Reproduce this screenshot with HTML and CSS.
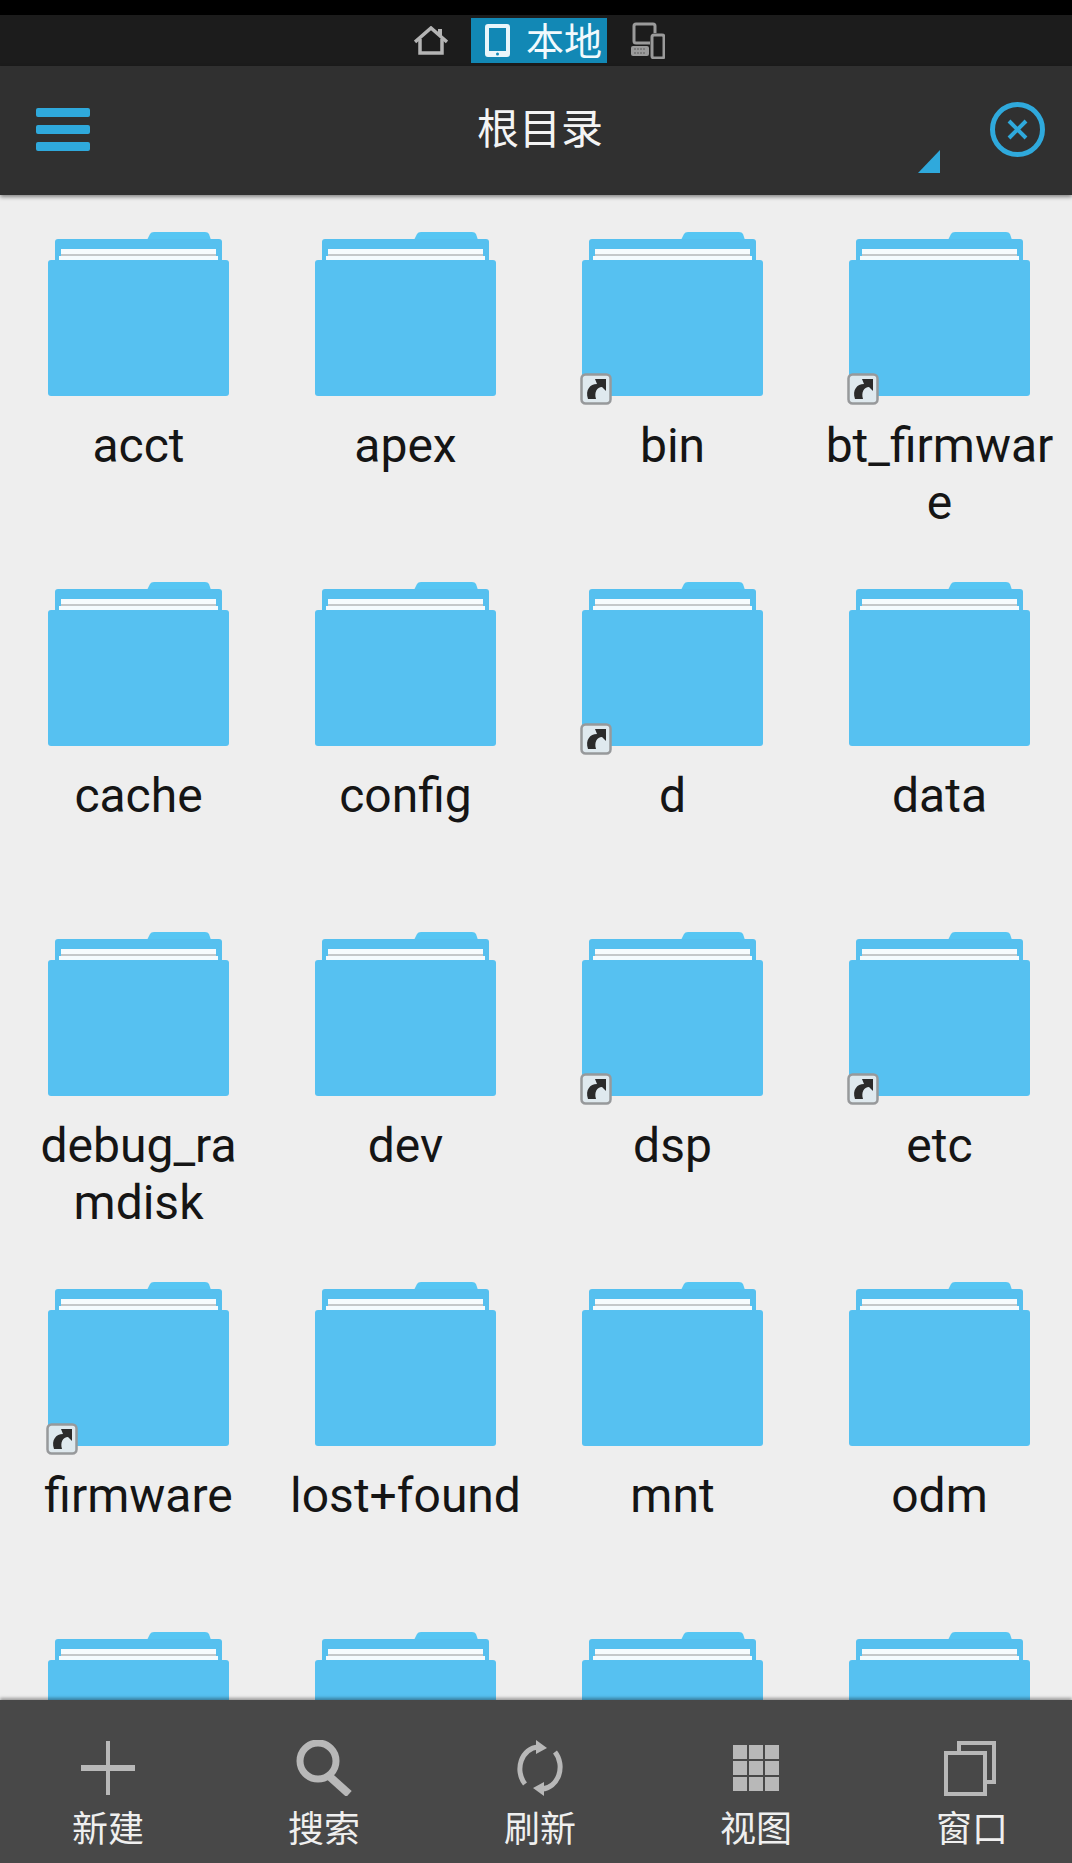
FILE: index.html
```html
<!DOCTYPE html>
<html lang="zh-CN">
<head>
    <meta charset="UTF-8">
    <meta name="viewport" content="width=device-width, initial-scale=1.0">
    <title>根目录</title>
    <link rel="stylesheet" href="styles.css">
</head>
<body>

<!-- Shared folder and shortcut drawings -->
<svg class="sprites" width="0" height="0">
    <symbol id="folder" viewBox="0 0 181 165">
        <path d="M99 8 L102 2 Q103 0 106 0 H157 Q160 0 161 2 L163 8 Z" fill="#56c6f3"/>
        <path d="M7 30 V10 Q7 7 10 7 H171 Q174 7 174 10 V30 Z" fill="#56c0ef"/>
        <rect x="13" y="17" width="155" height="5" fill="#f6fbfd"/>
        <rect x="13" y="22" width="155" height="2" fill="#c4c8ca"/>
        <rect x="11" y="24" width="159" height="4" fill="#f4fbfe"/>
        <path d="M0 161 V31 Q0 28 3 28 H178 Q181 28 181 31 V161 Q181 164 178 164 H3 Q0 164 0 161 Z" fill="#56c1f1"/>
    </symbol>
    <symbol id="shortcut" viewBox="0 0 32 32">
        <rect x="1.5" y="1.5" width="29" height="29" rx="4" fill="#dfe9ee" stroke="#97999b" stroke-width="2.5"/>
        <path d="M8 26 C5 17 10 11 17 11 L15 6 H26 V18 L22 14 C17 14 14 19 16 26 Z" fill="#2b2b2b"/>
    </symbol>
</svg>

<div class="status-bar"></div>

<div class="tab-bar">
    <svg class="tab-icon home-icon" viewBox="0 0 34 29" fill="none" stroke="#b4b4b4" stroke-width="3.5">
        <path d="M1 16 L17 2 L33 16"/>
        <path d="M6 13 V27 H28 V13"/>
        <path d="M26 3 V10" stroke-width="4"/>
    </svg>
    <div class="tab-active">
        <svg class="tablet-icon" viewBox="0 0 25 33">
            <path fill-rule="evenodd" fill="#eaf6fb" d="M3 0 H22 Q25 0 25 3 V30 Q25 33 22 33 H3 Q0 33 0 30 V3 Q0 0 3 0 Z M4 4 V27 H21 V4 Z"/>
            <circle cx="12.5" cy="30" r="1.5" fill="#1288b5"/>
        </svg>
        <span>本地</span>
    </div>
    <svg class="tab-icon devices-icon" viewBox="0 0 34 37" fill="none" stroke="#9a9a9a" stroke-width="3">
        <path d="M19 21 H5 Q3 21 3 19 V4 Q3 2 5 2 H22 Q24 2 24 4 V11"/>
        <rect x="21" y="13" width="12" height="23" rx="2"/>
        <rect x="0" y="24" width="18" height="10" rx="2" fill="#9a9a9a" stroke="none"/>
        <path d="M3 27 H15 M3 31 H15" stroke="#5c5c5c" stroke-width="1" stroke-dasharray="2 1"/>
    </svg>
</div>

<header class="top-bar">
    <div class="menu-icon"><i></i><i></i><i></i></div>
    <h1>根目录</h1>
    <div class="corner-mark"></div>
    <svg class="close-icon" viewBox="0 0 55 55" fill="none" stroke="#2fa9dc">
        <circle cx="27.5" cy="27.5" r="25" stroke-width="5"/>
        <path d="M19 19 L36 36 M36 19 L19 36" stroke-width="4"/>
    </svg>
</header>

<main class="file-grid">
    <div class="file-item"><div class="thumb"><svg class="folder"><use href="#folder"/></svg></div><p>acct</p></div>
    <div class="file-item"><div class="thumb"><svg class="folder"><use href="#folder"/></svg></div><p>apex</p></div>
    <div class="file-item"><div class="thumb"><svg class="folder"><use href="#folder"/></svg><svg class="badge"><use href="#shortcut"/></svg></div><p>bin</p></div>
    <div class="file-item"><div class="thumb"><svg class="folder"><use href="#folder"/></svg><svg class="badge"><use href="#shortcut"/></svg></div><p>bt_firmware</p></div>

    <div class="file-item"><div class="thumb"><svg class="folder"><use href="#folder"/></svg></div><p>cache</p></div>
    <div class="file-item"><div class="thumb"><svg class="folder"><use href="#folder"/></svg></div><p>config</p></div>
    <div class="file-item"><div class="thumb"><svg class="folder"><use href="#folder"/></svg><svg class="badge"><use href="#shortcut"/></svg></div><p>d</p></div>
    <div class="file-item"><div class="thumb"><svg class="folder"><use href="#folder"/></svg></div><p>data</p></div>

    <div class="file-item"><div class="thumb"><svg class="folder"><use href="#folder"/></svg></div><p>debug_ramdisk</p></div>
    <div class="file-item"><div class="thumb"><svg class="folder"><use href="#folder"/></svg></div><p>dev</p></div>
    <div class="file-item"><div class="thumb"><svg class="folder"><use href="#folder"/></svg><svg class="badge"><use href="#shortcut"/></svg></div><p>dsp</p></div>
    <div class="file-item"><div class="thumb"><svg class="folder"><use href="#folder"/></svg><svg class="badge"><use href="#shortcut"/></svg></div><p>etc</p></div>

    <div class="file-item"><div class="thumb"><svg class="folder"><use href="#folder"/></svg><svg class="badge"><use href="#shortcut"/></svg></div><p>firmware</p></div>
    <div class="file-item"><div class="thumb"><svg class="folder"><use href="#folder"/></svg></div><p>lost+found</p></div>
    <div class="file-item"><div class="thumb"><svg class="folder"><use href="#folder"/></svg></div><p>mnt</p></div>
    <div class="file-item"><div class="thumb"><svg class="folder"><use href="#folder"/></svg></div><p>odm</p></div>

    <div class="file-item"><div class="thumb"><svg class="folder"><use href="#folder"/></svg></div></div>
    <div class="file-item"><div class="thumb"><svg class="folder"><use href="#folder"/></svg></div></div>
    <div class="file-item"><div class="thumb"><svg class="folder"><use href="#folder"/></svg></div></div>
    <div class="file-item"><div class="thumb"><svg class="folder"><use href="#folder"/></svg></div></div>
</main>

<footer class="tool-bar">
    <div class="tool">
        <svg viewBox="0 0 56 56" fill="none" stroke="#b8b8b8" stroke-width="5">
            <path d="M28 1 V55" stroke-width="4"/>
            <path d="M1 28 H55" stroke-width="6"/>
        </svg>
        <span>新建</span>
    </div>
    <div class="tool">
        <svg viewBox="0 0 56 56" fill="none" stroke="#b8b8b8" stroke-width="7">
            <circle cx="22" cy="21" r="18"/>
            <path d="M33 36 L53 54" stroke-width="8"/>
        </svg>
        <span>搜索</span>
    </div>
    <div class="tool">
        <svg viewBox="0 0 56 56" fill="none" stroke="#b8b8b8" stroke-width="5">
            <path d="M13 44 A19 22 0 0 1 26 7"/>
            <path d="M43 12 A19 22 0 0 1 30 49"/>
            <path d="M24 0 L35 8 L24 14 Z M32 56 L21 48 L32 42 Z" fill="#b8b8b8" stroke="none"/>
        </svg>
        <span>刷新</span>
    </div>
    <div class="tool">
        <svg viewBox="0 0 56 56" fill="#b8b8b8">
            <rect x="5" y="5" width="14" height="14"/><rect x="21" y="5" width="14" height="14"/><rect x="37" y="5" width="14" height="14"/>
            <rect x="5" y="21" width="14" height="14"/><rect x="21" y="21" width="14" height="14"/><rect x="37" y="21" width="14" height="14"/>
            <rect x="5" y="37" width="14" height="14"/><rect x="21" y="37" width="14" height="14"/><rect x="37" y="37" width="14" height="14"/>
        </svg>
        <span>视图</span>
    </div>
    <div class="tool">
        <svg viewBox="0 0 56 56" fill="none" stroke="#b8b8b8" stroke-width="4">
            <path d="M15 11 V3 H50 V42 H42"/>
            <rect x="2" y="13" width="39" height="41"/>
        </svg>
        <span>窗口</span>
    </div>
</footer>

</body>
</html>
```

FILE: styles.css
```css
body, html {
    margin: 0;
    padding: 0;
    width: 1072px;
    height: 1863px;
    overflow: hidden;
}

body {
    display: flex;
    flex-direction: column;
    background-color: #eeeeee;
    font-family: Roboto, "Noto Sans CJK SC", sans-serif;
}

.sprites {
    position: absolute;
}

.status-bar {
    height: 15px;
    flex-shrink: 0;
    background-color: #000;
}

/* Location tabs */
.tab-bar {
    height: 51px;
    flex-shrink: 0;
    display: flex;
    justify-content: center;
    align-items: center;
    background-color: #1c1c1c;
}

.tab-icon {
    display: block;
}

.home-icon {
    width: 34px;
    height: 29px;
    margin-right: 23px;
    margin-left: 7px;
}

.devices-icon {
    width: 34px;
    height: 37px;
    margin-left: 24px;
}

.tab-active {
    width: 136px;
    height: 45px;
    box-sizing: border-box;
    padding-left: 14px;
    display: flex;
    align-items: center;
    background-color: #1288b5;
    color: #f2fafd;
    font-family: "Noto Sans CJK SC", sans-serif;
    font-size: 38px;
    line-height: 41px;
}

.tab-active span {
    margin-bottom: 4px;
}

.tablet-icon {
    width: 25px;
    height: 33px;
    margin-right: 16px;
}

/* Title bar */
.top-bar {
    position: relative;
    z-index: 1;
    height: 129px;
    flex-shrink: 0;
    box-sizing: border-box;
    padding: 0 0 10px 8px;
    display: flex;
    justify-content: center;
    align-items: center;
    background-color: #303030;
    box-shadow: 0 2px 4px rgba(0, 0, 0, 0.45);
}

.top-bar h1 {
    margin: 0;
    color: #f4f4f4;
    font-family: "Noto Sans CJK SC", sans-serif;
    font-size: 42px;
    font-weight: 400;
}

.menu-icon {
    position: absolute;
    left: 36px;
    top: 42px;
    width: 54px;
    display: flex;
    flex-direction: column;
    gap: 8px;
}

.menu-icon i {
    display: block;
    height: 9px;
    border-radius: 2px;
    background-color: #2fa9dc;
}

.corner-mark {
    position: absolute;
    left: 918px;
    top: 84px;
    width: 22px;
    height: 23px;
    background-color: #2fa9dc;
    clip-path: polygon(100% 0, 100% 100%, 0 100%);
}

.close-icon {
    position: absolute;
    left: 990px;
    top: 36px;
    width: 55px;
    height: 55px;
}

/* Folder grid */
.file-grid {
    flex: 1;
    min-height: 0;
    overflow: hidden;
    box-sizing: border-box;
    padding: 37px 0 0 5px;
    display: grid;
    grid-template-columns: repeat(4, 267px);
    grid-auto-rows: 350px;
}

.file-item {
    display: flex;
    flex-direction: column;
    align-items: center;
}

.thumb {
    position: relative;
    width: 181px;
    height: 165px;
}

.folder {
    display: block;
    width: 181px;
    height: 165px;
}

.badge {
    position: absolute;
    left: -2px;
    bottom: -8px;
    width: 32px;
    height: 32px;
}

.file-item p {
    margin: 20px 0 0;
    width: 232px;
    color: #151515;
    font-size: 48px;
    line-height: 57px;
    text-align: center;
    word-break: break-all;
}

/* Bottom toolbar */
.tool-bar {
    position: relative;
    height: 163px;
    flex-shrink: 0;
    box-sizing: border-box;
    padding: 40px 0 0 8px;
    display: flex;
    justify-content: center;
    background-color: #484848;
    box-shadow: 0 -2px 3px rgba(0, 0, 0, 0.35);
}

.tool {
    width: 216px;
    flex-shrink: 0;
    display: flex;
    flex-direction: column;
    align-items: center;
}

.tool svg {
    display: block;
    width: 56px;
    height: 56px;
}

.tool span {
    margin-top: 6px;
    color: #efefef;
    font-family: "Noto Sans CJK SC", sans-serif;
    font-size: 36px;
    line-height: 48px;
}
```
